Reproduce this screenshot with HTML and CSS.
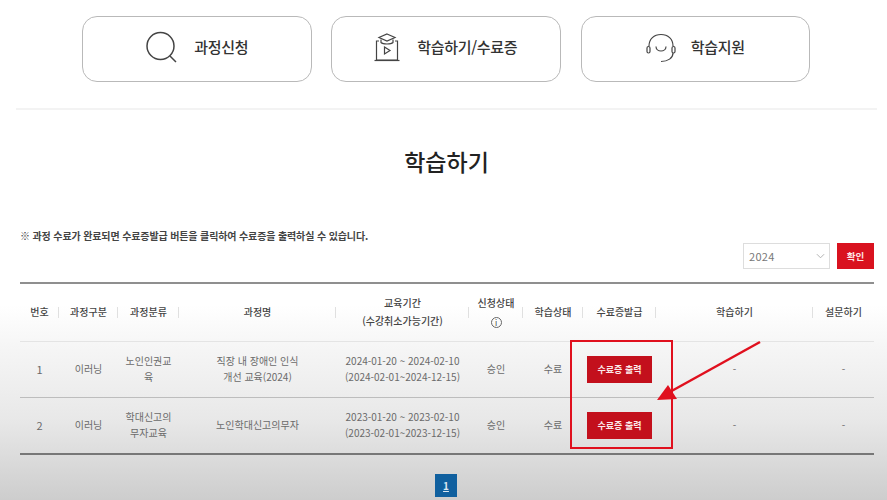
FILE: index.html
```html
<!DOCTYPE html>
<html lang="ko">
<head>
<meta charset="utf-8">
<title>학습하기</title>
<link rel="stylesheet" href="styles.css">
</head>
<body>
<div class="page">
  <nav class="tabs">
    <a class="tab">
      <svg class="ico" viewBox="0 0 34 34" width="34" height="34"><circle cx="15.500" cy="15" r="13.500"/><path d="M25 25l6 6"/></svg>
      <span class="tab-1">과정신청</span>
    </a>
    <a class="tab">
      <svg class="ico ico-thin" viewBox="0 0 26 30" width="26" height="30"><path d="M13 1l8 3.500-8 3.500-8-3.500z"/><path d="M7 6.500v3c2 2 10 2 12 0v-3"/><path d="M5 8H2.500v19h21V8H21"/><path d="M0.500 27.500h25"/><path d="M10.500 14l5.500 3.500-5.500 3.500z"/></svg>
      <span class="tab-2">학습하기/수료증</span>
    </a>
    <a class="tab">
      <svg class="ico ico-thin" viewBox="0 0 30 30" width="30" height="30"><path d="M3 13C3 6 8 1.500 15 1.500S27 6 27 13"/><rect x="1" y="13.500" width="3" height="6.500" rx="1.500"/><rect x="26" y="13.500" width="3" height="6.500" rx="1.500"/><path d="M10 13.500c0 6 10 6 10 0"/><path d="M27 20c0 5-5 8.500-12 8.500"/></svg>
      <span class="tab-3">학습지원</span>
    </a>
  </nav>
  <hr class="rule">
  <h1 class="title">학습하기</h1>
  <p class="note">※ 과정 수료가 완료되면 수료증발급 버튼을 클릭하여 수료증을 출력하실 수 있습니다.</p>
  <div class="filter">
    <div class="select"><span>2024</span>
      <svg viewBox="0 0 10 6" width="9" height="6"><path d="M1 1l4 4 4-4"/></svg>
    </div>
    <button class="confirm">확인</button>
  </div>
  <table class="grid">
    <colgroup>
      <col class="c1"><col class="c2"><col class="c3"><col class="c4"><col class="c5">
      <col class="c6"><col class="c7"><col class="c8"><col class="c9"><col class="c10">
    </colgroup>
    <thead>
      <tr>
        <th>번호</th><th>과정구분</th><th>과정분류</th><th>과정명</th>
        <th>교육기간<br>(수강취소가능기간)</th>
        <th>신청상태<br><span class="info">i</span></th>
        <th>학습상태</th><th>수료증발급</th><th>학습하기</th><th>설문하기</th>
      </tr>
    </thead>
    <tbody>
      <tr>
        <td class="num">1</td><td>이러닝</td><td>노인인권교<br>육</td>
        <td>직장 내 장애인 인식<br>개선 교육(2024)</td>
        <td>2024-01-20 ~ 2024-02-10<br>(2024-02-01~2024-12-15)</td>
        <td>승인</td><td>수료</td><td><button class="print">수료증 출력</button></td><td>-</td><td>-</td>
      </tr>
      <tr>
        <td class="num">2</td><td>이러닝</td><td>학대신고의<br>무자교육</td>
        <td>노인학대신고의무자</td>
        <td>2023-01-20 ~ 2023-02-10<br>(2023-02-01~2023-12-15)</td>
        <td>승인</td><td>수료</td><td><button class="print">수료증 출력</button></td><td>-</td><td>-</td>
      </tr>
    </tbody>
  </table>
  <div class="pager"><a class="page-on">1</a></div>
  <svg class="mark" viewBox="0 0 887 500" width="887" height="500">
    <rect class="mark-box" x="571" y="341" width="101" height="107"/>
    <path class="mark-line" d="M760 342L668 393"/>
    <path class="mark-head" d="M657 400L668 385L677 399z"/>
  </svg>
</div>
</body>
</html>
```
FILE: styles.css
```css
* { box-sizing: border-box; }
html, body { margin: 0; height: 100%; }
body {
  overflow: hidden;
  font-family: "Noto Sans CJK KR", "Noto Sans", sans-serif;
  color: #333;
  background: linear-gradient(#fff 0, #fff 305px, #f6f6f6 345px, #e8e8e8 420px, #cdcdcd 500px);
}
.page { position: relative; width: 887px; height: 500px; padding-top: 16px; }
.tabs { display: flex; gap: 20px; margin-left: 82px; }
.tab {
  width: 229.500px; height: 66px;
  display: flex; align-items: center; justify-content: center;
  border: 1px solid #b9b9b9; border-radius: 15px;
  font-size: 15px; font-weight: 500; color: #333; letter-spacing: -0.3px;
}
.tab:nth-child(2) { margin-left: -0.500px; }
.tab span { margin-bottom: 6px; }
.tab svg { margin-bottom: 2px; }
.tab-1 { margin-left: 15px; }
.tab-2 { margin-left: 17px; }
.tab-3 { margin-left: 15px; }
.ico { fill: none; stroke: #444; stroke-width: 1.500; flex: none; }
.ico-thin { stroke-width: 1.200; }
.rule { margin: 26px 10px 0 16px; border: 0; height: 2px; background: #f3f3f3; }
.title {
  margin: 35px 0 0; padding-left: 6px; text-align: center;
  font-size: 23px; line-height: 32px; font-weight: 500; color: #222;
}
.note {
  margin: 51px 0 0 20px;
  font-size: 10px; line-height: 16px; font-weight: 700; color: #444; letter-spacing: -0.13px;
}
.filter { display: flex; justify-content: flex-end; align-items: center; gap: 7px; margin: -2px 13px 0 0; height: 27px; }
.select {
  width: 87px; height: 26px; display: flex; align-items: center; justify-content: space-between;
  padding: 0 4px 0 5px; border: 1px solid #ddd; background: #fff;
  font-size: 11px; color: #777; letter-spacing: 0.3px;
}
.select svg { fill: none; stroke: #aaa; stroke-width: 1; }
.confirm {
  width: 37px; height: 26px; padding: 0; border: 0; background: #d9121f;
  font: 700 9.500px "Noto Sans CJK KR", sans-serif; color: #fde3e3;
}
.grid {
  table-layout: fixed; border-collapse: collapse;
  width: 854px; margin: 13px 0 0 20px;
  border-top: 2px solid #8f8f8f; border-bottom: 2px solid #777;
}
.c1 { width: 39px; } .c2 { width: 59px; } .c3 { width: 61px; } .c4 { width: 157px; }
.c5 { width: 133px; } .c6 { width: 54px; } .c7 { width: 60px; } .c8 { width: 73px; }
.c9 { width: 157px; } .c10 { width: 61px; }
th {
  height: 58px; padding: 0 2px;
  font-size: 10px; line-height: 18px; font-weight: 500; color: #444;
  border-bottom: 1px solid #e4e4e4;
  background: linear-gradient(#e0e0e0, #e0e0e0) right center / 1px 11px no-repeat;
}
th:last-child { background: none; }
.info {
  display: inline-block; width: 11px; height: 11px; border: 1px solid #666; border-radius: 50%;
  font-size: 8px; line-height: 9px; font-weight: 400; vertical-align: middle;
}
td {
  height: 56px; padding: 0 2px; text-align: center;
  font-size: 10px; line-height: 16.500px; color: #6a6a6a;
  border-bottom: 1px solid #bdbdbd;
}
tbody tr:last-child td { border-bottom: 0; height: 57px; }
.num { font-size: 11px; }
.print {
  width: 65px; height: 27px; padding: 0; border: 0; background: #c3101c; vertical-align: middle;
  font: 700 9px "Noto Sans CJK KR", sans-serif; color: #fbe9e9;
}
.pager { display: flex; justify-content: center; margin: 19px 0 0 5px; }
.page-on {
  width: 22px; height: 23px; display: flex; align-items: center; justify-content: center;
  background: #10609f; color: #dbe8f2; font-size: 10px; font-weight: 700;
  text-decoration: underline;
}
.mark { position: absolute; left: 0; top: 0; pointer-events: none; }
.mark-box { fill: none; stroke: #e0101e; stroke-width: 2; }
.mark-line { fill: none; stroke: #e0101e; stroke-width: 2.500; }
.mark-head { fill: #e0101e; }
```
